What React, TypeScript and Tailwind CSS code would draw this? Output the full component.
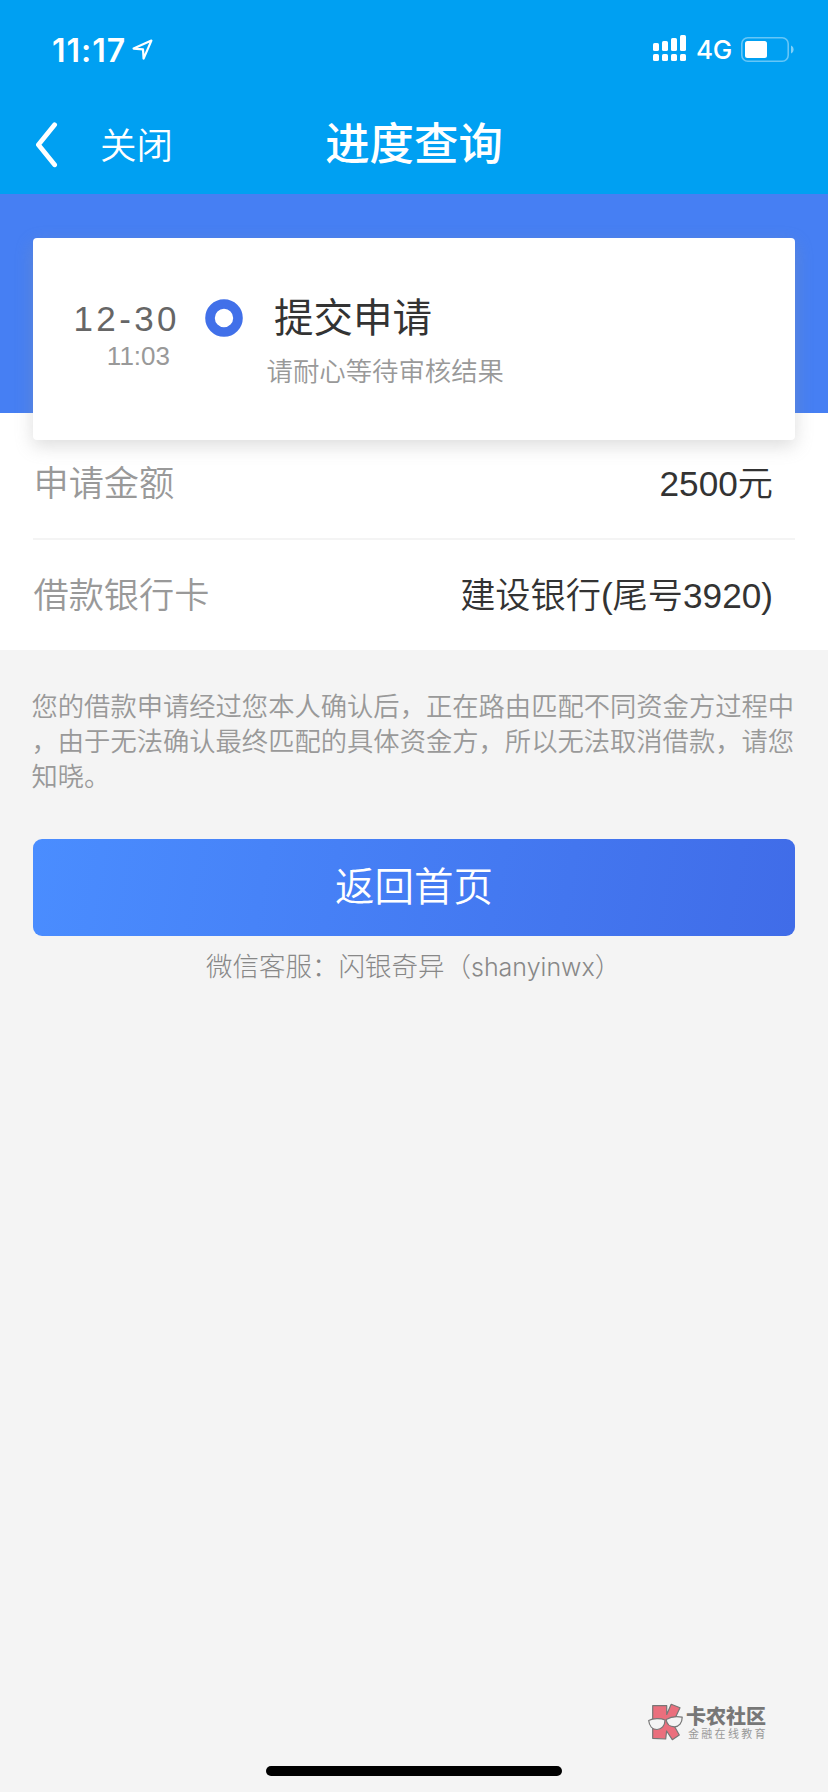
import React from "react";

const SIGNAL_BARS = [
  { x: 0, y: 8, h: 8 },
  { x: 9, y: 6, h: 10 },
  { x: 18, y: 3, h: 13 },
  { x: 27, y: 0, h: 16 },
];

const NOTICE_LINES = [
  "您的借款申请经过您本人确认后，正在路由匹配不同资金方过程中",
  "，由于无法确认最终匹配的具体资金方，所以无法取消借款，请您",
  "知晓。",
];

function StatusBar() {
  return (
    <div className="flex h-[98px] items-center pl-[52px] pr-[34px] font-['Inter',sans-serif]">
      <span className="mt-[3px] text-[32px] font-semibold leading-[38px] tracking-[1px] text-white">11:17</span>
      <svg className="ml-[6px] mt-[2px]" width="22" height="22" viewBox="0 0 22 22" fill="none">
        <path d="M1.6 9.6 L19.4 1.6 L11.6 19.6 L11 10.4 Z" stroke="white" strokeWidth="2.2" strokeLinejoin="round" />
      </svg>
      <svg className="-mt-[2px] ml-auto" width="33" height="26" viewBox="0 0 33 26" fill="white">
        {SIGNAL_BARS.map((b) => (
          <g key={b.x}>
            <rect x={b.x} y={b.y} width="6" height={b.h} rx="1.6" />
            <rect x={b.x} y="19" width="6" height="7" rx="1.6" />
          </g>
        ))}
      </svg>
      <span className="ml-[10px] mt-[2px] w-[35px] whitespace-nowrap text-[26px] font-medium leading-[30px] tracking-[-0.3px] text-white">4G</span>
      <svg className="ml-[10px] mt-[1px]" width="53" height="25" viewBox="0 0 53 25">
        <rect x="0.8" y="0.8" width="46.4" height="23.4" rx="6" fill="none" stroke="white" strokeOpacity="0.4" strokeWidth="1.6" />
        <rect x="4" y="4" width="22" height="17" rx="2.5" fill="white" />
        <path d="M50 8.5 C53.4 9.8 53.4 15.2 50 16.5 Z" fill="white" fillOpacity="0.5" />
      </svg>
    </div>
  );
}

function NavBar() {
  return (
    <div className="grid h-[96px] grid-cols-[1fr_auto_1fr] items-center text-white">
      <div className="flex items-center pl-[35px]">
        <svg className="-mt-[3px]" width="23" height="46" viewBox="0 0 23 46" fill="none">
          <path d="M19.6 2.8 L3.4 22.8 L19.6 42.8" stroke="white" strokeWidth="4.8" strokeLinecap="round" strokeLinejoin="round" />
        </svg>
        <span className="ml-[42px] mt-[1px] text-[36.5px] font-[350] leading-[48px]">关闭</span>
      </div>
      <h1 className="-mt-[3px] text-[44.4px] font-medium leading-[56px]">进度查询</h1>
      <div />
    </div>
  );
}

function ProgressCard() {
  return (
    <section className="mx-[33px] flex h-[202px] rounded-[4px] bg-white shadow-[0_6px_18px_rgba(150,150,150,0.32)]">
      <div className="w-[147px] pt-[60px] text-right">
        <div className="text-[35px] leading-[42px] tracking-[3.4px] text-[#666]">12-30</div>
        <div className="pr-[10px] text-[26px] leading-[33px] text-[#999]">11:03</div>
      </div>
      <svg className="ml-[25px] mt-[61px]" width="38" height="38" viewBox="0 0 38 38">
        <circle cx="19" cy="19" r="14" fill="none" stroke="#4170e9" strokeWidth="9.6" />
      </svg>
      <div className="pt-[56px]">
        <h2 className="ml-[31px] text-[39.5px] leading-[48px] text-[#333]">提交申请</h2>
        <p className="ml-[23.5px] mt-[12px] text-[26.4px] font-[350] leading-[36px] text-[#999]">请耐心等待审核结果</p>
      </div>
    </section>
  );
}

function InfoRow({ label, value }: { label: string; value: string }) {
  return (
    <div className="flex h-[110px] items-center justify-between pr-[22px] pt-[2px] text-[35.2px] leading-[48px]">
      <span className="pl-[0.5px] font-[350] text-[#999]">{label}</span>
      <span className="font-[350] text-[#333]">{value}</span>
    </div>
  );
}

function Watermark() {
  return (
    <div className="absolute left-[648px] top-[1703px] flex">
      <svg width="35" height="38" viewBox="0 0 35 38">
        <g stroke="#777" strokeWidth="1.2" strokeLinejoin="round">
          <path d="M4.7 2.7 H18.7 V11.5 L23.2 1.3 L32 4.7 L24.7 20.3 L31.3 32 L24.3 36.7 L18.6 28 L17.7 36 L4.7 35.3 Z" fill="#ea6f7d" />
          <path d="M0.7 17.5 C5 15.3 12.5 15 17 17 C17 22.5 13.5 26.5 9 26.5 C4.5 26.5 1.2 23 0.7 17.5 Z" fill="#f4f4f4" />
          <path d="M18.2 16.5 C22.5 13.8 29.5 13.2 34.2 14.2 C34.2 20 31 23.8 26.6 23.8 C22.2 23.8 18.7 21.5 18.2 16.5 Z" fill="#f4f4f4" />
        </g>
      </svg>
      <div className="ml-[3px] whitespace-nowrap font-['Noto_Sans_CJK_SC',sans-serif] text-[#777]">
        <div className="text-[20px] font-black leading-[25px]">卡农社区</div>
        <div className="ml-[2px] text-[11px] leading-[10px] tracking-[2.3px] text-[#999]">金融在线教育</div>
      </div>
    </div>
  );
}

export default function App() {
  return (
    <div className="relative min-h-[1792px] w-[828px] overflow-hidden bg-[#f4f4f4] font-['Liberation_Sans','Noto_Sans_CJK_SC',sans-serif]">
      <header className="h-[194px] bg-[#00a0f2]">
        <StatusBar />
        <NavBar />
      </header>

      <main>
        <div className="h-[456px] bg-[linear-gradient(#467ff3_0_219.5px,white_219.5px)] pt-[44px]">
          <ProgressCard />
          <div className="mx-[33px] -mt-[12px]">
            <InfoRow label="申请金额" value="2500元" />
            <div className="h-[2px] bg-[#f4f4f4]" />
            <InfoRow label="借款银行卡" value="建设银行(尾号3920)" />
          </div>
        </div>

        <div className="ml-[31.5px] mt-[40px] text-[26.3px] font-[350] leading-[35.2px] text-[#999]">
          {NOTICE_LINES.map((line) => (
            <p key={line} className="whitespace-nowrap">{line}</p>
          ))}
        </div>

        <button className="mx-[33px] mt-[43px] flex h-[97px] w-[762px] items-center justify-center rounded-[9px] bg-[linear-gradient(100deg,#4a8dff,#406ce8)] pt-[2px] text-[39.5px] font-[350] text-white">
          返回首页
        </button>
        <p className="ml-[206px] mt-[13px] whitespace-nowrap text-[26.5px] font-light leading-[36px] text-[#888]">
          微信客服：闪银奇异（<span className="font-['Inter',sans-serif] text-[25px]">shanyinwx</span>）
        </p>
      </main>

      <Watermark />
      <div className="absolute bottom-[16px] left-[266px] h-[10px] w-[296px] rounded-full bg-black" />
    </div>
  );
}
